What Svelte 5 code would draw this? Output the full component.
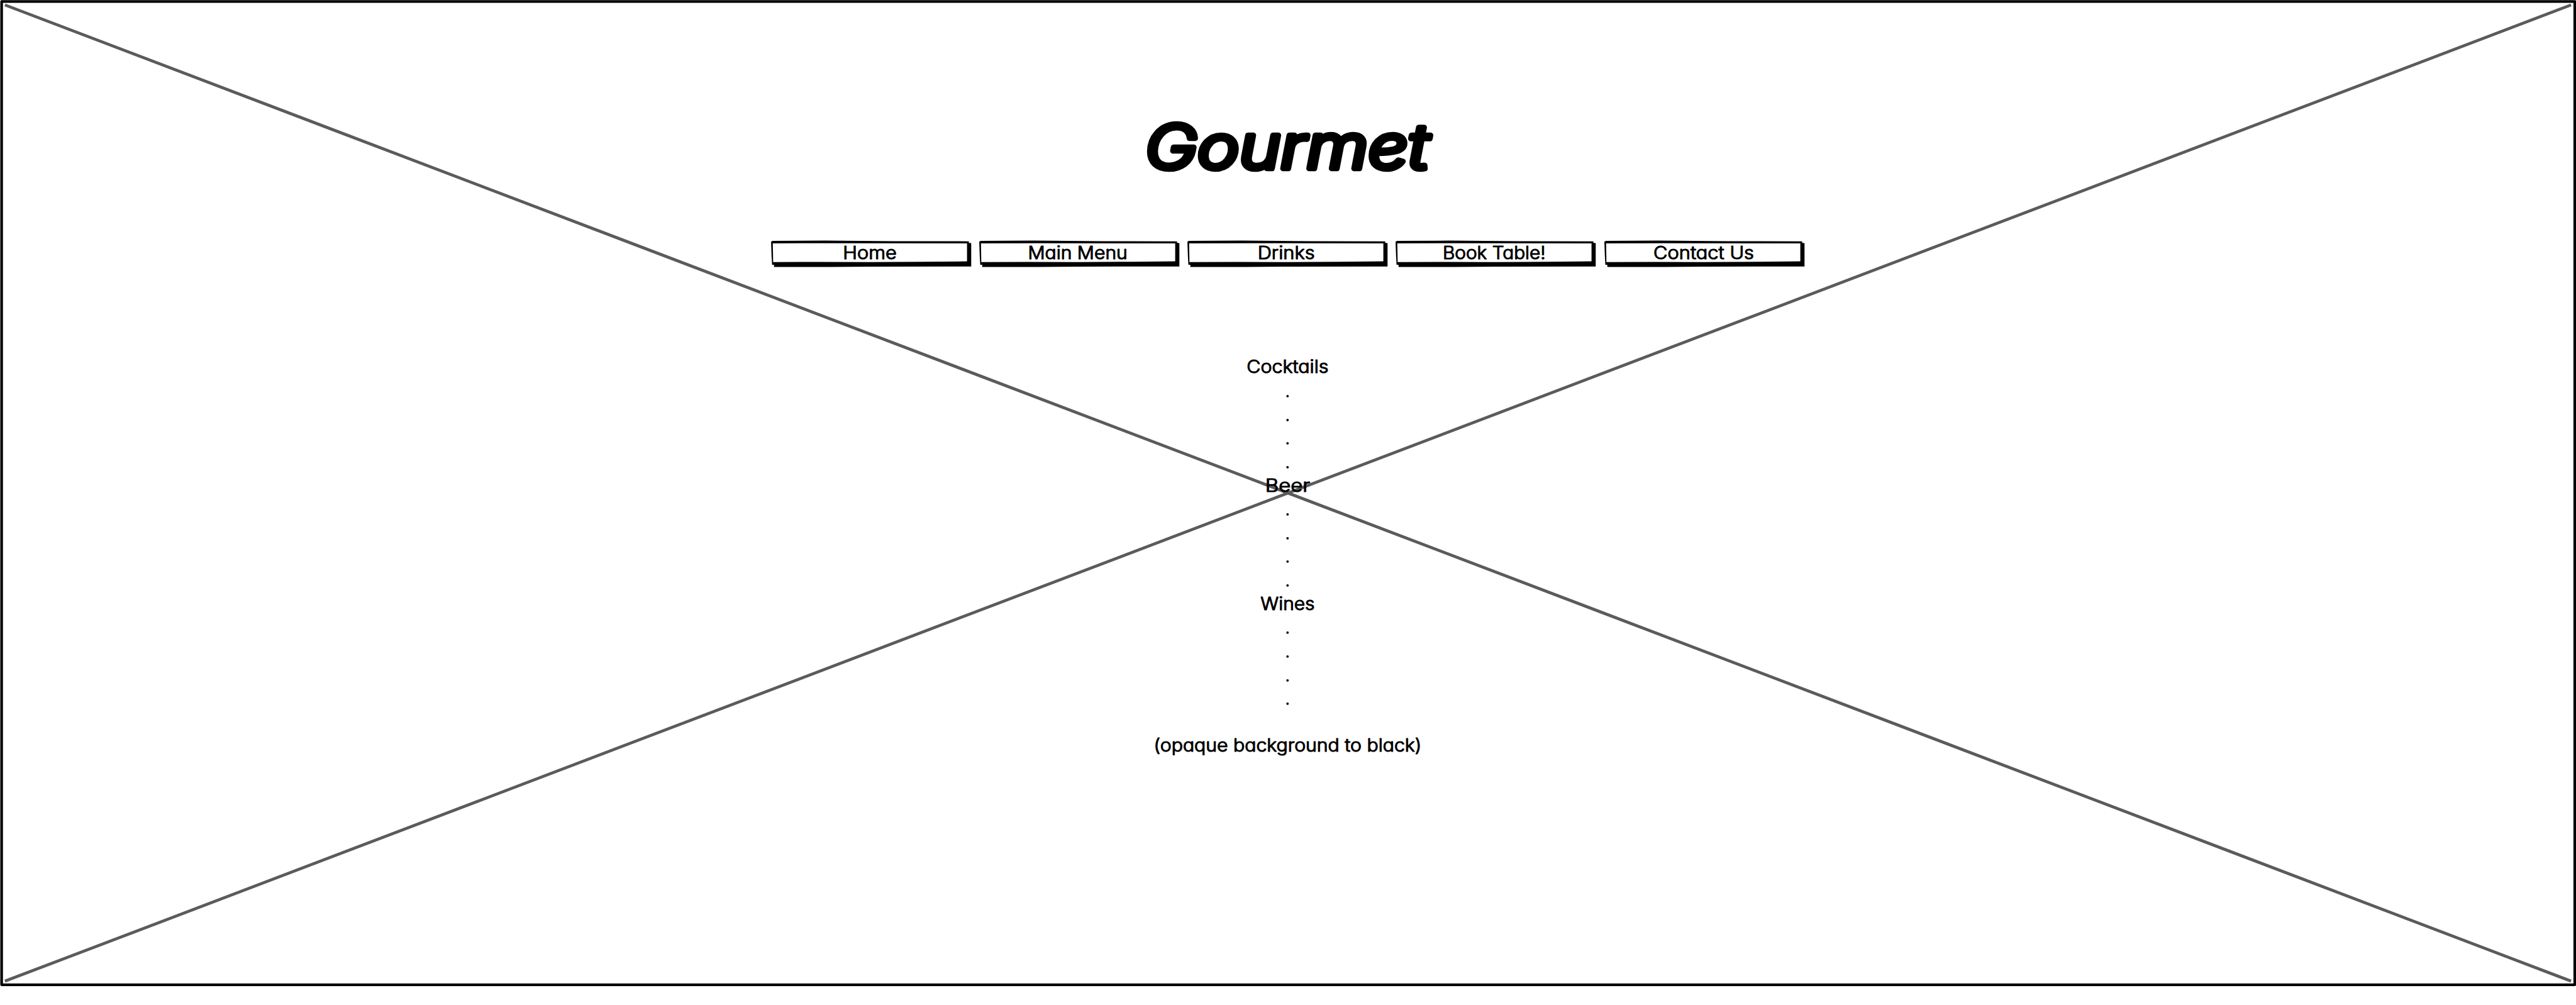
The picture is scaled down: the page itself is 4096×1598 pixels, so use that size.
<script>
  const nav = [
    { label: 'Home', mid: 200.3, length: 109 },
    { label: 'Main Menu', mid: 199.8, length: 202 },
    { label: 'Drinks', mid: 200.4, length: 116 },
    { label: 'Book Table!', mid: 200, length: 209 },
    { label: 'Contact Us', mid: 201.6, length: 204 }
  ];

  const dots = Array.from({ length: 4 }, () => ({ label: '.' }));

  const lines = [
    { label: 'Cocktails', length: 166 },
    ...dots,
    { label: 'Beer', length: 91 },
    ...dots,
    { label: 'Wines', length: 110 },
    ...dots,
    { label: '' },
    { label: '(opaque background to black)', length: 543 }
  ];
</script>

<main class="page">
  <svg class="frame" viewBox="0 0 5224 2038" aria-hidden="true">
    <path class="diagonal" d="M10 10 5214 1989.7M10 1989.7 5214 10" />
    <path class="edge" d="M3.3 3 H5221.5 V1997 H3.3 Z" />
  </svg>

  <h1 class="title">
    <svg viewBox="0 0 600 130">
      <text x="298" y="102" textLength="576" lengthAdjust="spacingAndGlyphs">Gourmet</text>
    </svg>
  </h1>

  <nav class="nav">
    {#each nav as item}
      <button class="tab">
        <svg viewBox="0 0 406 54">
          <path
            class="ink"
            fill-rule="evenodd"
            d="M0 1.5 3 0 110-.6 250 .6 401 .8 401.5 4 406 4.5V52L200 52.2 120 53 6 53V48.5H2L1 30ZM3.5 5 120 4.8 397.5 5.2V41.6L310 42.3 200 43.2 100 42.6 4.2 43.2Z"
          />
          <text x={item.mid} y="36.9" textLength={item.length} lengthAdjust="spacingAndGlyphs">{item.label}</text>
        </svg>
      </button>
    {/each}
  </nav>

  <section class="list">
    {#each lines as line}
      <p class="line">
        <svg viewBox="0 0 600 48">
          {#if line.length}
            <text x="299" y="37" textLength={line.length} lengthAdjust="spacingAndGlyphs">{line.label}</text>
          {:else}
            <text class="dot" x="298.8" y="36.5">{line.label}</text>
          {/if}
        </svg>
      </p>
    {/each}
  </section>
</main>

<style>
  :global(body) {
    margin: 0;
    background: #fff;
    overflow: hidden;
  }

  .page {
    --u: calc(100vw / 5224);
    position: relative;
    box-sizing: border-box;
    width: 100vw;
    height: calc(2038 * var(--u));
    padding-top: calc(240 * var(--u));
    display: flex;
    flex-direction: column;
    align-items: center;
    background: #fff;
    font-family: Inter, 'Liberation Sans', sans-serif;
    font-feature-settings: 'cv11' 1;
  }

  svg {
    display: block;
    width: 100%;
    height: 100%;
    overflow: visible;
  }

  .frame {
    position: absolute;
    inset: 0;
  }

  .diagonal {
    fill: none;
    stroke: #5b5b5d;
    stroke-width: 6;
  }

  .edge {
    fill: none;
    stroke: #000;
    stroke-width: 5.4;
    stroke-linejoin: round;
  }

  text {
    font-size: 36.2px;
    font-weight: 300;
    text-anchor: middle;
    fill: #000;
    stroke: #000;
    stroke-width: 1.5;
    stroke-linejoin: round;
  }

  .title {
    position: relative;
    margin: 0 0 calc(119 * var(--u));
    width: calc(600 * var(--u));
    height: calc(130 * var(--u));
  }

  .title text {
    font-size: 123px;
    font-weight: 300;
    font-style: italic;
    stroke-width: 11;
  }

  .nav {
    position: relative;
    display: flex;
    gap: calc(16.4 * var(--u));
    margin-right: calc(1.6 * var(--u));
  }

  .tab {
    width: calc(406 * var(--u));
    height: calc(54 * var(--u));
    padding: 0;
    border: 0;
    background: none;
    font: inherit;
    font-feature-settings: inherit;
  }

  .ink {
    fill: #000;
  }

  .list {
    position: relative;
    margin-top: calc(177 * var(--u));
    width: calc(600 * var(--u));
  }

  .line {
    margin: 0;
    height: calc(48 * var(--u));
  }

  .line .dot {
    font-size: 27px;
    stroke-width: 1.8;
  }
</style>
